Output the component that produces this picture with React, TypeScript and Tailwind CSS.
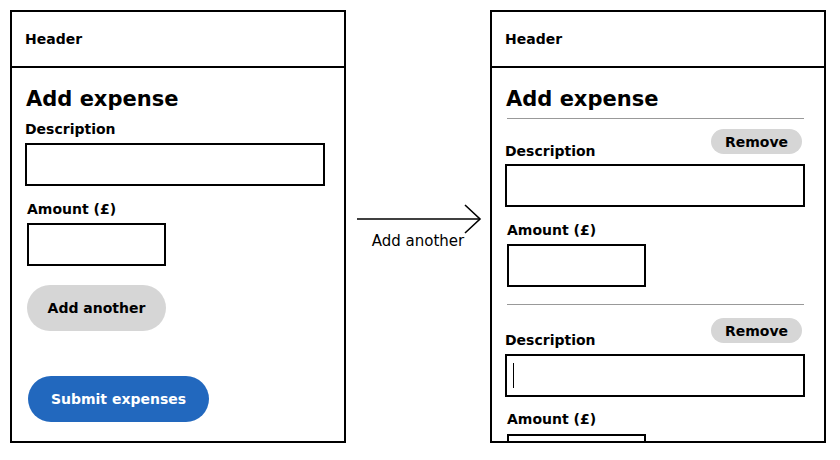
import React from "react";

const font = { fontFamily: '"DejaVu Sans", sans-serif' };

function Header() {
  return (
    <div className="h-[56px] shrink-0 border-b-2 border-black flex items-center pl-[13px]">
      <span className="text-[14px] leading-[16px] font-bold text-black">Header</span>
    </div>
  );
}

function Input({ w, cursor }: { w: string; cursor?: boolean }) {
  return (
    <div className={`${w} h-[43px] border-2 border-black bg-white flex items-center shrink-0`}>
      {cursor ? <span className="ml-[6px] w-px h-[25px] bg-black" /> : null}
    </div>
  );
}

function Label({ children }: { children: React.ReactNode }) {
  return <div className="text-[14px] leading-[16px] font-bold text-black">{children}</div>;
}

function RemoveRow() {
  return (
    <div className="flex items-start justify-between w-[300px]">
      <div className="mt-[14px]">
        <Label>Description</Label>
      </div>
      <button className="mr-[3px] w-[91px] h-[25px] rounded-full bg-[#d6d6d6] text-[14px] leading-[16px] font-bold text-black flex items-center justify-center">
        Remove
      </button>
    </div>
  );
}

export default function App() {
  return (
    <div className="w-[840px] h-[460px] bg-white flex items-start pt-[10px] pl-[10px]" style={font}>
      {/* Left panel */}
      <div className="w-[336px] h-[433px] border-2 border-black flex flex-col overflow-hidden shrink-0">
        <Header />
        <div className="shrink-0 flex flex-col items-start pl-[13px] pt-[19px]">
          <h1 className="ml-[1px] text-[21px] leading-[24px] font-bold text-black">Add expense</h1>
          <div className="mt-[10px]">
            <Label>Description</Label>
          </div>
          <div className="mt-[6px]">
            <Input w="w-[300px]" />
          </div>
          <div className="ml-[2px] mt-[15px] flex flex-col">
            <Label>Amount (£)</Label>
            <div className="mt-[6px]">
              <Input w="w-[139px]" />
            </div>
          </div>
          <button className="ml-[2px] mt-[19px] w-[139px] h-[46px] rounded-full bg-[#d6d6d6] text-[14px] leading-[16px] font-bold text-black flex items-center justify-center">
            Add another
          </button>
          <button className="ml-[3px] mt-[45px] w-[181px] h-[46px] rounded-full bg-[#2268be] text-[14px] leading-[16px] font-bold text-white flex items-center justify-center">
            Submit expenses
          </button>
        </div>
      </div>

      {/* Arrow */}
      <div className="w-[144px] shrink-0 flex flex-col items-center pt-[193px]">
        <svg width="144" height="31" viewBox="0 0 144 31" className="block">
          <line x1="11" y1="16" x2="133" y2="16" stroke="black" strokeWidth="1.6" />
          <polyline points="119,2 134,16 119,30" fill="none" stroke="black" strokeWidth="1.6" />
        </svg>
        <div className="-mt-[2px] text-[15px] leading-[18px] text-black">Add another</div>
      </div>

      {/* Right panel */}
      <div className="w-[336px] h-[433px] border-2 border-black flex flex-col overflow-hidden shrink-0">
        <Header />
        <div className="shrink-0 flex flex-col items-start pl-[13px] pt-[19px]">
          <h1 className="ml-[1px] text-[21px] leading-[24px] font-bold text-black">Add expense</h1>
          <div className="ml-[2px] mt-[7px] w-[297px] h-px bg-[#999999]" />
          <div className="mt-[10px]">
            <RemoveRow />
          </div>
          <div className="mt-[5px]">
            <Input w="w-[300px]" />
          </div>
          <div className="ml-[2px] mt-[15px] flex flex-col">
            <Label>Amount (£)</Label>
            <div className="mt-[6px]">
              <Input w="w-[139px]" />
            </div>
          </div>
          <div className="ml-[2px] mt-[17px] w-[297px] h-px bg-[#999999]" />
          <div className="mt-[13px]">
            <RemoveRow />
          </div>
          <div className="mt-[6px]">
            <Input w="w-[300px]" cursor />
          </div>
          <div className="ml-[2px] mt-[14px] flex flex-col">
            <Label>Amount (£)</Label>
            <div className="mt-[7px]">
              <Input w="w-[139px]" />
            </div>
          </div>
        </div>
      </div>
    </div>
  );
}
